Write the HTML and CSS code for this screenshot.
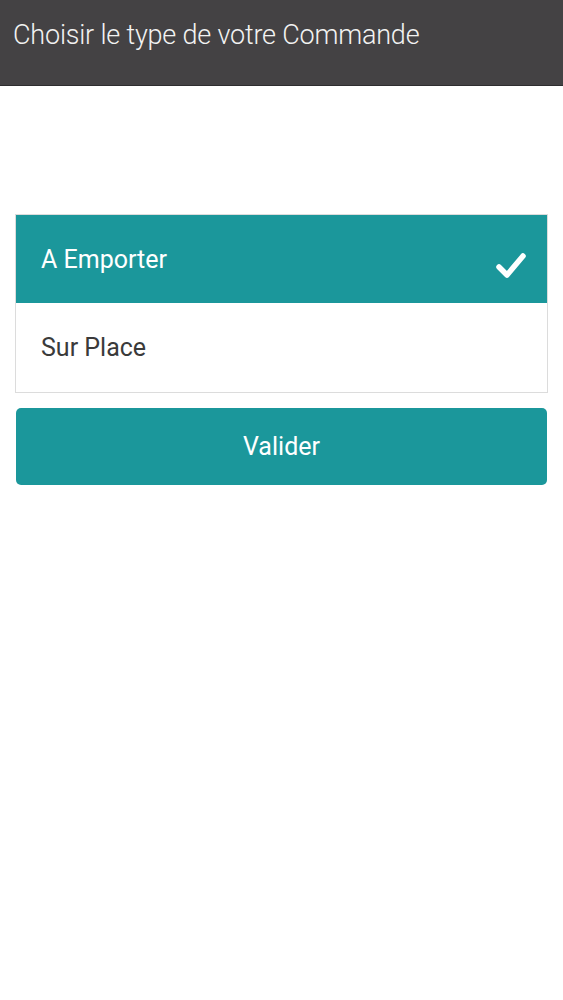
FILE: index.html
```html
<!DOCTYPE html>
<html lang="fr">
<head>
    <meta charset="UTF-8">
    <meta name="viewport" content="width=device-width, initial-scale=1.0">
    <title>Type de commande</title>
    <link rel="stylesheet" href="styles.css">
</head>
<body>
    <header class="topbar">
        <h1>Choisir le type de votre Commande</h1>
    </header>
    <main class="content">
        <ul class="choices">
            <li class="choice selected">
                <span>A Emporter</span>
                <svg class="check" width="30" height="28" viewBox="0 0 30 28">
                    <path d="M3 15 L11 23 L27 4" fill="none" stroke="#fff" stroke-width="5.5" stroke-linecap="round" stroke-linejoin="round"/>
                </svg>
            </li>
            <li class="choice">
                <span>Sur Place</span>
            </li>
        </ul>
        <button class="validate" type="button">Valider</button>
    </main>
</body>
</html>
```

FILE: styles.css
```css
body {
    font-family: Roboto, "Noto Sans", sans-serif;
    background-color: #fff;
    margin: 0;
    padding: 0;
}

.topbar {
    background-color: #444244;
    height: 86px;
    border-bottom: 1px solid #2e2d2f;
    box-sizing: border-box;
    padding: 18px 13px 0;
}

.topbar h1 {
    margin: 0;
    color: #f2f2f2;
    font-size: 27px;
    font-weight: 300;
    letter-spacing: -0.2px;
    line-height: 34px;
}

.content {
    padding: 128px 15px 0;
}

.choices {
    list-style: none;
    margin: 0;
    padding: 0;
    border: 1px solid #dcdcdc;
}

.choice {
    height: 89px;
    display: flex;
    align-items: center;
    justify-content: space-between;
    padding: 0 21px 0 25px;
    font-size: 25px;
    color: #3a3a3a;
}

.choice.selected {
    background-color: #1b979b;
    color: #fff;
    height: 88px;
}

.check {
    margin-top: 13px;
}

.validate {
    display: block;
    width: calc(100% - 2px);
    margin: 15px 1px 0;
    height: 77px;
    background: #1b979b;
    color: #fff;
    border: none;
    border-radius: 5px;
    font-family: inherit;
    font-size: 25px;
    cursor: pointer;
}
```
